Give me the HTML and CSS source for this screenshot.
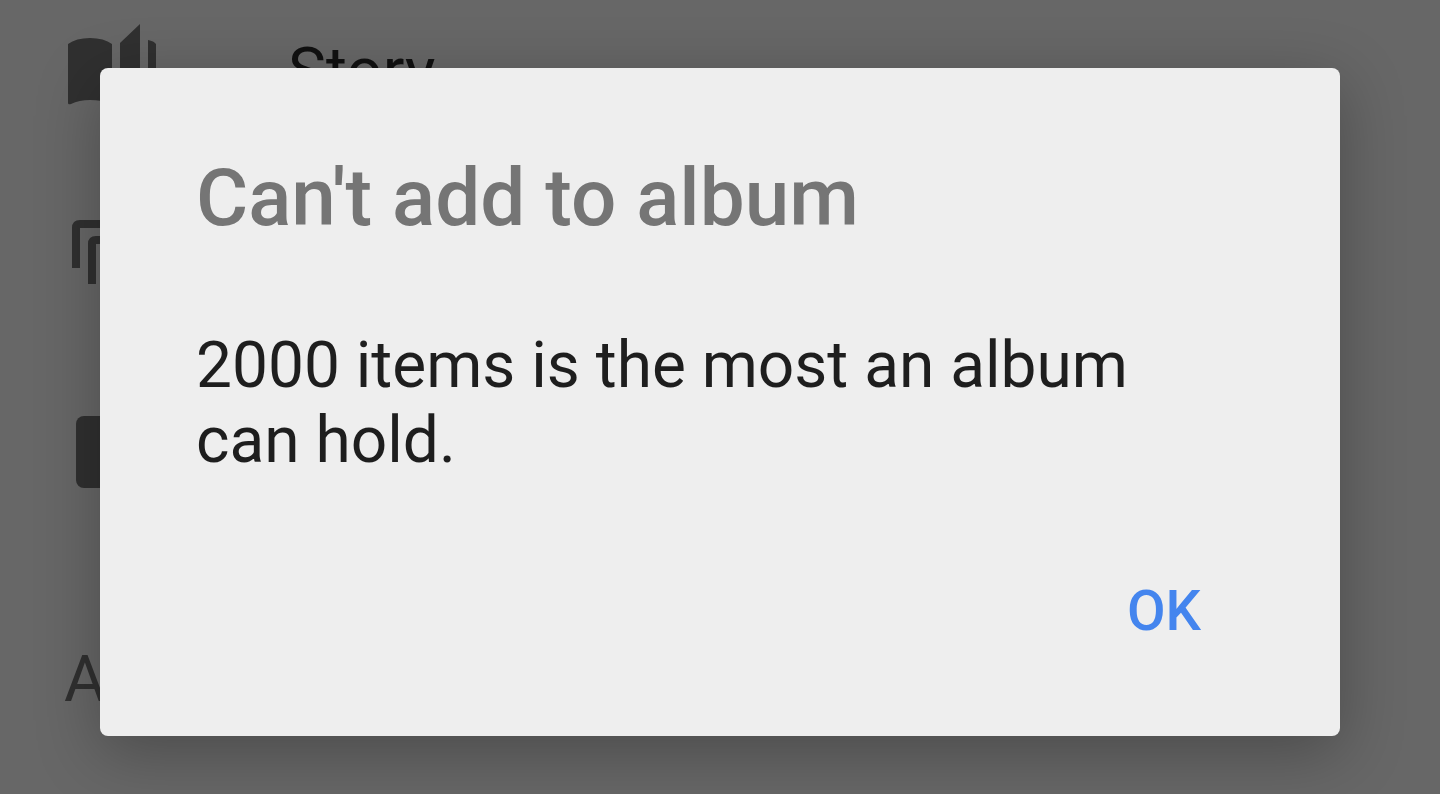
FILE: index.html
```html
<!DOCTYPE html>
<html lang="en">
<head>
<meta charset="utf-8">
<meta name="viewport" content="width=device-width, initial-scale=1">
<title>Can't add to album</title>
<link rel="stylesheet" href="styles.css">
</head>
<body>
<main class="menu">
  <div class="menu-row">
    <svg class="icon" viewBox="0 0 96 96" aria-hidden="true"><path d="M4 32Q12 26 26 26T48 32V92Q38 88 26 88Q15 88 7 92Q4 93 4 91ZM56 31L76 12V84L56 92ZM84 28Q90 29 92 32V92H84Z"/></svg>
    <span class="label">Story</span>
  </div>
  <div class="menu-row">
    <svg class="icon" viewBox="0 0 96 96" aria-hidden="true"><path d="M8 60V20Q8 12 16 12H72V20H16V60ZM24 76V36Q24 28 32 28H84V36H32V76Z"/></svg>
  </div>
  <div class="menu-row">
    <svg class="icon" viewBox="0 0 96 96" aria-hidden="true"><rect x="12" y="12" width="72" height="72" rx="8"/></svg>
  </div>
  <p class="section">Albums</p>
</main>
<div class="overlay">
  <section class="dialog" role="alertdialog" aria-labelledby="dialog-title" aria-describedby="dialog-message">
    <h1 class="title" id="dialog-title">Can't add to album</h1>
    <p class="message" id="dialog-message">2000 items is the most an album can hold.</p>
    <div class="actions"><button class="ok" type="button">OK</button></div>
  </section>
</div>
</body>
</html>
```
FILE: styles.css
```css
* { box-sizing: border-box; }
body {
  margin: 0;
  min-height: 100vh;
  background: #676767;
  font-family: Roboto, sans-serif;
  overflow: hidden;
}
.menu { padding: 12px 64px 0; color: #303030; }
.menu-row { display: flex; align-items: flex-start; gap: 128px; margin-bottom: 100px; }
.icon { width: 96px; height: 96px; flex: none; fill: currentColor; }
.label { padding-top: 24px; color: #111; font-size: 64px; line-height: 72px; }
.section { margin: 142px 0 0; font-size: 64px; line-height: 76px; }
.overlay {
  position: absolute;
  inset: 0;
  padding: 68px 100px 58px;
}
.dialog {
  display: flex;
  flex-direction: column;
  height: 100%;
  padding: 82px 96px 87px;
  border-radius: 8px;
  background: #eee;
  box-shadow: 0 16px 64px rgba(0, 0, 0, 0.28);
}
.title { margin: 0; color: #757575; font-size: 80px; line-height: 96px; font-weight: 500; }
.message { margin: 82px 0 0; color: #1e1e1e; font-size: 64px; line-height: 75px; }
.actions { display: flex; justify-content: flex-end; margin-top: auto; }
.ok {
  border: 0;
  padding: 0 43px;
  background: none;
  color: #4485ee;
  font: 500 56px/76px Roboto, sans-serif;
}
```
